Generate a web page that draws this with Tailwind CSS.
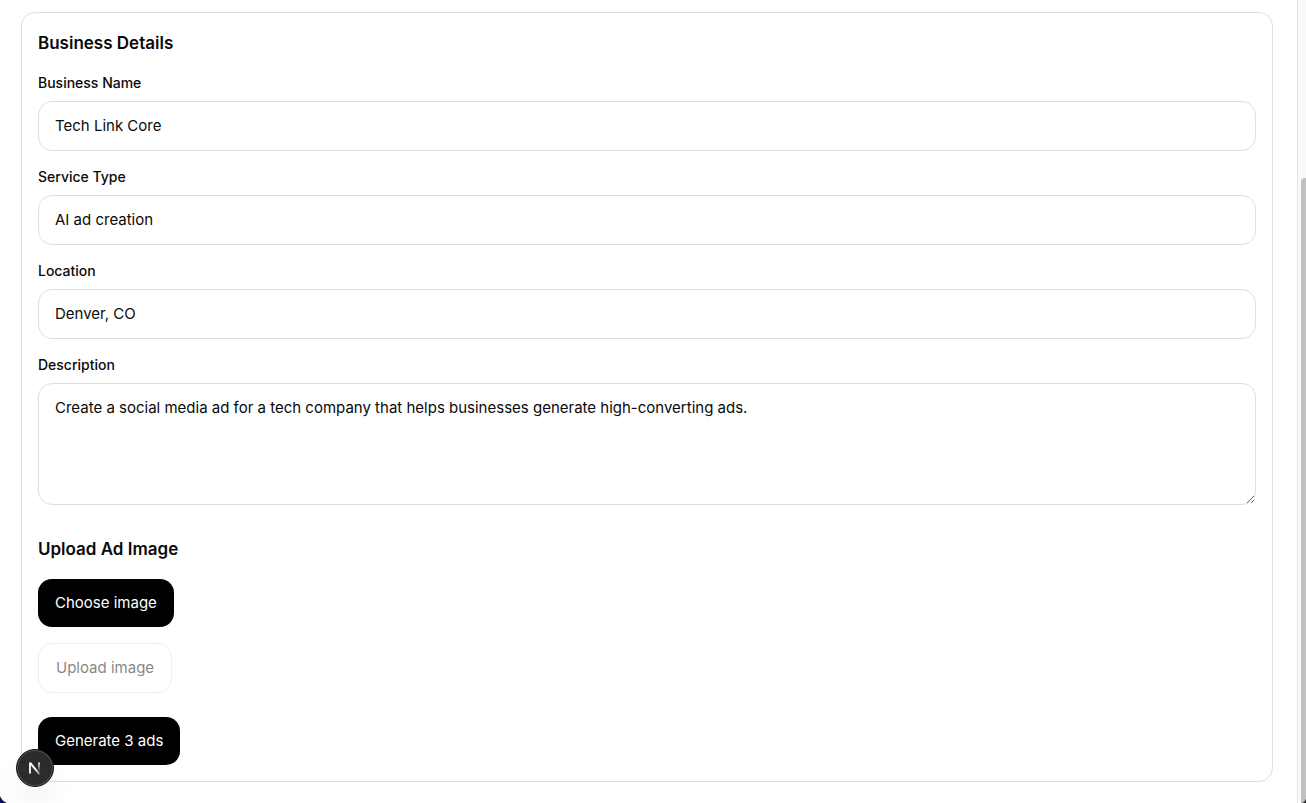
<!DOCTYPE html>
<html lang="en">
<head>
    <meta charset="UTF-8">
    <meta name="viewport" content="width=device-width, initial-scale=1.0">
    <title>Ad Generator</title>
    <script src="https://cdn.jsdelivr.net/npm/@tailwindcss/browser@4"></script>
</head>
<body class="flex min-h-screen bg-white text-[#0a0a0a] text-[15px] leading-6 font-['Inter','Liberation_Sans',sans-serif]">
    <main class="flex-1 min-w-0 pt-3 pl-[21px] pr-6 pb-5">
        <form class="border border-[#dedede] rounded-[14px] p-4">
            <section class="flex flex-col gap-4">
                <h2 class="text-[17px] leading-7 font-semibold">Business Details</h2>

                <div class="flex flex-col gap-2">
                    <label for="business-name" class="text-sm leading-5 font-medium">Business Name</label>
                    <input type="text" id="business-name" value="Tech Link Core" class="w-full px-4 py-3 border border-[#dedede] rounded-[14px]">
                </div>

                <div class="flex flex-col gap-2">
                    <label for="service-type" class="text-sm leading-5 font-medium">Service Type</label>
                    <input type="text" id="service-type" value="AI ad creation" class="w-full px-4 py-3 border border-[#dedede] rounded-[14px]">
                </div>

                <div class="flex flex-col gap-2">
                    <label for="location" class="text-sm leading-5 font-medium">Location</label>
                    <input type="text" id="location" value="Denver, CO" class="w-full px-4 py-3 border border-[#dedede] rounded-[14px]">
                </div>

                <div class="flex flex-col gap-2">
                    <label for="description" class="text-sm leading-5 font-medium">Description</label>
                    <textarea id="description" rows="4" class="w-full px-4 py-3 border border-[#dedede] rounded-[14px] resize-y">Create a social media ad for a tech company that helps businesses generate high-converting ads.</textarea>
                </div>
            </section>

            <section class="mt-[30px] flex flex-col items-start gap-4">
                <h2 class="text-[17px] leading-7 font-semibold">Upload Ad Image</h2>
                <button type="button" class="px-[17px] py-3 bg-black text-white rounded-[14px]">Choose image</button>
                <button type="button" disabled class="px-[17px] py-3 border border-[#dedede] rounded-[14px] opacity-50">Upload image</button>
            </section>

            <button type="submit" class="mt-6 block px-[17px] py-3 bg-black text-white rounded-[14px]">Generate 3 ads</button>
        </form>
    </main>

    <!-- scroll track -->
    <div class="w-[9px] shrink-0 flex flex-col items-end border-l border-[#e4e4e4] bg-[#fafafa] pt-[178px]">
        <div class="w-[5px] flex-1 rounded-tl bg-[#c1c1c1]"></div>
    </div>

    <!-- dev tools badge -->
    <button type="button" aria-label="Open Next.js Dev Tools" class="fixed left-4 bottom-4 size-[38px] rounded-full border border-[#171717] bg-[#2c2c2c] flex items-center justify-center shadow-[inset_0_0_0_1px_#505050,0_16px_32px_-8px_rgba(0,0,0,0.14)]">
        <svg width="14" height="14" viewBox="0 0 14 14" fill="none">
            <defs>
                <linearGradient id="diagonal" x1="8" y1="8" x2="13" y2="14" gradientUnits="userSpaceOnUse">
                    <stop stop-color="#fff"/>
                    <stop offset="1" stop-color="#fff" stop-opacity="0.2"/>
                </linearGradient>
                <linearGradient id="stem" x1="11" y1="1" x2="11" y2="11" gradientUnits="userSpaceOnUse">
                    <stop stop-color="#fff"/>
                    <stop offset="1" stop-color="#fff" stop-opacity="0"/>
                </linearGradient>
            </defs>
            <path d="M2 12.5V1.5" stroke="#fff" stroke-width="1.8"/>
            <path d="M2.2 1.8L11.6 13.4" stroke="url(#diagonal)" stroke-width="1.9"/>
            <path d="M11 1.5V10.5" stroke="url(#stem)" stroke-width="1.8"/>
        </svg>
    </button>

    <!-- window corner -->
    <svg class="fixed left-0 bottom-0" width="7" height="7" viewBox="0 0 7 7">
        <path d="M0 0Q2 5 7 7H0Z" fill="#222"/>
        <path d="M0 2Q1 6 5 7H0Z" fill="#0b0b6e"/>
    </svg>
    <svg class="fixed right-0 bottom-0" width="4" height="4" viewBox="0 0 4 4">
        <path d="M4 0Q3 3 0 4H4Z" fill="#222"/>
    </svg>
</body>
</html>
